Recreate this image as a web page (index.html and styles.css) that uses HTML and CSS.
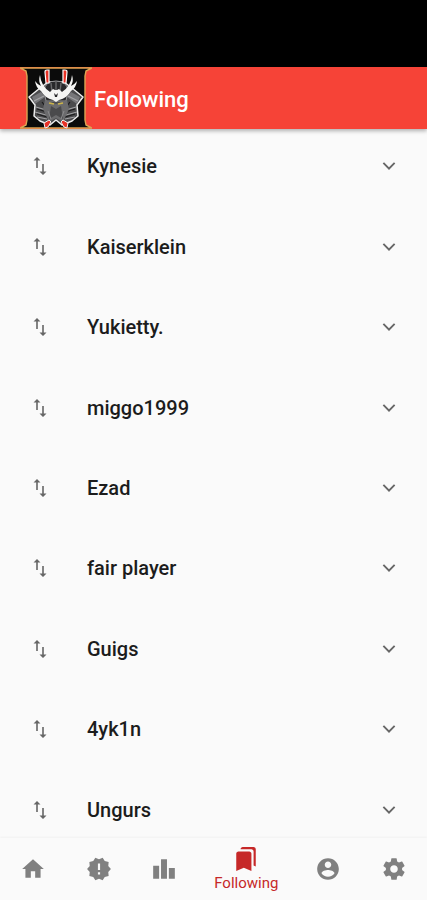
FILE: index.html
```html
<!DOCTYPE html>
<html lang="en">
<head>
    <meta charset="UTF-8">
    <meta name="viewport" content="width=device-width, initial-scale=1">
    <title>Following</title>
    <link rel="stylesheet" href="styles.css">
</head>
<body>
    <!-- Shared icons -->
    <svg class="icon-defs" aria-hidden="true">
        <symbol id="icon-swap" viewBox="0 0 24 24">
            <path d="M15.8 17.5V10h-1.6v7.5h-2.7L15 21l3.5-3.5h-2.7zM9 3L5.5 6.5h2.7V14h1.6V6.5h2.7L9 3z"/>
        </symbol>
        <symbol id="icon-expand" viewBox="0 0 24 24">
            <path d="M16.59 8.59L12 13.17 7.41 8.59 6.2 9.8l5.8 5.8 5.8-5.8z"/>
        </symbol>
    </svg>

    <div class="app">
        <div class="status-bar"></div>

        <header class="app-bar">
            <svg class="logo" viewBox="0 0 72 62" aria-hidden="true">
                <path d="M0 1H72L66 4 65 9V53L66 58 72 61H0L6 58 7 53V9L6 4z" fill="#0b0b0b" stroke="#dca552" stroke-width="1.4"/>
                <!-- Shoulder and cheek plates -->
                <path d="M20 21L9 30l6 8-1 11 6 5 10 4 6-5 6 5 10-4 6-5-1-11 6-8-11-9-8-6H28z" fill="#4b4b4d" stroke="#ededed" stroke-width="1.5" stroke-linejoin="round"/>
                <path d="M12 30l9-5 4 5-10 7zM60 30l-9-5-4 5 10 7z" fill="#77777a"/>
                <path d="M14 34l10-5M58 34l-10-5M16 40l10 3M15 45l11 3M17 50l10 2M56 40l-10 3M57 45l-11 3M55 50l-10 2" stroke="#a2a2a4" stroke-width="1.2"/>
                <path d="M17 42l10 3M17 47l10 3M55 42l-10 3M55 47l-10 3M22 35l6 8M50 35l-6 8" stroke="#1b1b1c" stroke-width="1.2"/>
                <!-- Helmet -->
                <path d="M24 24Q25 14 36 14T48 24L46 34H26z" fill="#29292b" stroke="#949496"/>
                <path d="M36 15v12M31 16l1 9M41 16l-1 9" stroke="#69696b" stroke-width="1.4"/>
                <path d="M25 33l11 4 11-4 2 9-6 13-7-4-7 4-6-13z" fill="#6b6b6d"/>
                <path d="M31 39l5 3 5-3 2 13-7-4-7 4z" fill="#4a4a4c"/>
                <path d="M28 44l3 8M44 44l-3 8" stroke="#8b8b8d"/>
                <path d="M29 36l5 1M43 36l-5 1" stroke="#ccb449" stroke-width="1.6"/>
                <!-- Horns and crest -->
                <path d="M26 16L25 5q0-2 2-2h2v13zM46 16l1-11q0-2-2-2h-2v13z" fill="#e83226" stroke="#fff" stroke-width="1.2"/>
                <path d="M20 8q-2 6 1 11-4-2-6-5 1 7 6 10 4 7 12 9l3 2 3-2q8-2 12-9 5-3 6-10-2 3-6 5 3-5 1-11-1 11-10 17l-3-3-2 1h-2l-2-1-3 3q-9-6-10-17z" fill="#f5f5f3"/>
                <path d="M34 26l2 2 2-2-1 4h-2z" fill="#29292b"/>
                <!-- Tassels -->
                <path d="M29 53l-5 3 1 5 3-1 3-5zM43 53l5 3-1 5-3-1-3-5z" fill="#e83226" stroke="#eee"/>
            </svg>
            <h1 class="title">Following</h1>
        </header>

        <main>
            <ul class="player-list">
                <li class="player">
                    <svg class="icon-swap"><use href="#icon-swap"/></svg>
                    <span class="name">Kynesie</span>
                    <button class="expand" aria-label="Expand Kynesie"><svg><use href="#icon-expand"/></svg></button>
                </li>
                <li class="player">
                    <svg class="icon-swap"><use href="#icon-swap"/></svg>
                    <span class="name">Kaiserklein</span>
                    <button class="expand" aria-label="Expand Kaiserklein"><svg><use href="#icon-expand"/></svg></button>
                </li>
                <li class="player">
                    <svg class="icon-swap"><use href="#icon-swap"/></svg>
                    <span class="name">Yukietty.</span>
                    <button class="expand" aria-label="Expand Yukietty."><svg><use href="#icon-expand"/></svg></button>
                </li>
                <li class="player">
                    <svg class="icon-swap"><use href="#icon-swap"/></svg>
                    <span class="name">miggo1999</span>
                    <button class="expand" aria-label="Expand miggo1999"><svg><use href="#icon-expand"/></svg></button>
                </li>
                <li class="player">
                    <svg class="icon-swap"><use href="#icon-swap"/></svg>
                    <span class="name">Ezad</span>
                    <button class="expand" aria-label="Expand Ezad"><svg><use href="#icon-expand"/></svg></button>
                </li>
                <li class="player">
                    <svg class="icon-swap"><use href="#icon-swap"/></svg>
                    <span class="name">fair player</span>
                    <button class="expand" aria-label="Expand fair player"><svg><use href="#icon-expand"/></svg></button>
                </li>
                <li class="player">
                    <svg class="icon-swap"><use href="#icon-swap"/></svg>
                    <span class="name">Guigs</span>
                    <button class="expand" aria-label="Expand Guigs"><svg><use href="#icon-expand"/></svg></button>
                </li>
                <li class="player">
                    <svg class="icon-swap"><use href="#icon-swap"/></svg>
                    <span class="name">4yk1n</span>
                    <button class="expand" aria-label="Expand 4yk1n"><svg><use href="#icon-expand"/></svg></button>
                </li>
                <li class="player">
                    <svg class="icon-swap"><use href="#icon-swap"/></svg>
                    <span class="name">Ungurs</span>
                    <button class="expand" aria-label="Expand Ungurs"><svg><use href="#icon-expand"/></svg></button>
                </li>
            </ul>
        </main>

        <nav class="bottom-nav">
            <a class="nav-item" href="#home" aria-label="Home">
                <svg viewBox="0 0 24 24"><path d="M10 20v-6h4v6h5v-8h3L12 3 2 12h3v8z"/></svg>
            </a>
            <a class="nav-item" href="#news" aria-label="News">
                <svg viewBox="0 0 24 24"><path d="M23 12l-2.44-2.78.34-3.68-3.61-.82-1.89-3.18L12 3 8.6 1.54 6.71 4.72l-3.61.81.34 3.68L1 12l2.44 2.78-.34 3.69 3.61.82 1.89 3.18L12 21l3.4 1.46 1.89-3.18 3.61-.82-.34-3.68L23 12zm-10 5h-2v-2h2v2zm0-4h-2V7h2v6z"/></svg>
            </a>
            <a class="nav-item" href="#leaderboard" aria-label="Leaderboard">
                <svg viewBox="0 0 24 24"><path d="M7.5 21H2V9h5.5v12zm7.25-18h-5.5v18h5.5V3zM22 11h-5.5v10H22V11z"/></svg>
            </a>
            <a class="nav-item active" href="#following" aria-current="page">
                <svg viewBox="0 0 24 24"><path d="M19 18l2 1V3c0-1.1-.9-2-2-2H8.99C7.89 1 7 1.9 7 3h10c1.1 0 2 .9 2 2v13zM15 5H5c-1.1 0-2 .9-2 2v16l7-3 7 3V7c0-1.1-.9-2-2-2z"/></svg>
                <span>Following</span>
            </a>
            <a class="nav-item" href="#profile" aria-label="Profile">
                <svg viewBox="0 0 24 24"><path d="M12 2C6.48 2 2 6.48 2 12s4.48 10 10 10 10-4.48 10-10S17.52 2 12 2zm0 3c1.66 0 3 1.34 3 3s-1.34 3-3 3-3-1.34-3-3 1.34-3 3-3zm0 14.2c-2.5 0-4.71-1.28-6-3.22.03-1.99 4-3.08 6-3.08 1.99 0 5.97 1.09 6 3.08-1.29 1.94-3.5 3.22-6 3.22z"/></svg>
            </a>
            <a class="nav-item" href="#settings" aria-label="Settings">
                <svg viewBox="0 0 24 24"><path d="M19.43 12.98c.04-.32.07-.64.07-.98s-.03-.66-.07-.98l2.11-1.65c.19-.15.24-.42.12-.64l-2-3.46c-.12-.22-.39-.3-.61-.22l-2.49 1c-.52-.4-1.08-.73-1.69-.98l-.38-2.65C14.46 2.18 14.25 2 14 2h-4c-.25 0-.46.18-.49.42l-.38 2.65c-.61.25-1.17.59-1.69.98l-2.49-1c-.23-.09-.49 0-.61.22l-2 3.46c-.13.22-.07.49.12.64l2.11 1.65c-.04.32-.07.65-.07.98s.03.66.07.98l-2.11 1.65c-.19.15-.24.42-.12.64l2 3.46c.12.22.39.3.61.22l2.49-1c.52.4 1.08.73 1.69.98l.38 2.65c.03.24.24.42.49.42h4c.25 0 .46-.18.49-.42l.38-2.65c.61-.25 1.17-.59 1.69-.98l2.49 1c.23.09.49 0 .61-.22l2-3.46c.12-.22.07-.49-.12-.64l-2.11-1.65zM12 15.5c-1.93 0-3.5-1.57-3.5-3.5s1.57-3.5 3.5-3.5 3.5 1.57 3.5 3.5-1.57 3.5-3.5 3.5z"/></svg>
            </a>
        </nav>
    </div>
</body>
</html>
```
FILE: styles.css
```css
body {
    margin: 0;
    font-family: Roboto, "Liberation Sans", sans-serif;
    background-color: #fafafa;
    color: #1c1c1c;
}
svg {
    display: block;
    flex: none;
    fill: currentColor;
}
.icon-defs {
    display: none;
}
.app {
    display: flex;
    flex-direction: column;
    min-height: 100vh;
}
.status-bar {
    height: 67px;
    background: #000;
}
.app-bar {
    display: flex;
    align-items: center;
    gap: 2px;
    padding-left: 20px;
    background: #f64337;
    color: white;
    box-shadow: 0 2px 4px rgba(0,0,0,0.3);
    z-index: 1;
}
.logo {
    width: 72px;
    height: 62px;
    fill: none;
}
.title {
    margin: 0;
    padding-top: 2px;
    font-size: 22px;
    font-weight: 500;
}
main {
    display: flex;
    flex: 1;
    margin: -3px 0 -12px;
}
.player-list {
    flex: 1;
    display: grid;
    grid-auto-rows: minmax(80px, 1fr);
    margin: 0;
    padding: 0;
    list-style: none;
}
.player {
    display: flex;
    align-items: center;
    padding: 0 22px 0 28px;
}
.icon-swap {
    width: 24px;
    height: 24px;
    color: #666;
}
.name {
    flex: 1;
    padding-left: 35px;
    font-size: 20px;
    font-weight: 500;
}
.expand {
    padding: 3px;
    border: none;
    background: none;
    color: #666;
    cursor: pointer;
}
.expand svg {
    width: 26px;
    height: 26px;
}
.bottom-nav {
    position: sticky;
    bottom: 0;
    display: flex;
    height: 62px;
    background: #fafafa;
    box-shadow: 0 -1px 2px rgba(0,0,0,0.04);
}
.nav-item {
    flex: 2;
    display: flex;
    flex-direction: column;
    align-items: center;
    justify-content: center;
    gap: 1px;
    color: #808080;
    text-decoration: none;
}
.nav-item svg {
    width: 26px;
    height: 26px;
}
.nav-item.active {
    flex: 3;
    gap: 2px;
    color: #c62828;
    font-size: 15px;
    line-height: 18px;
}
```
